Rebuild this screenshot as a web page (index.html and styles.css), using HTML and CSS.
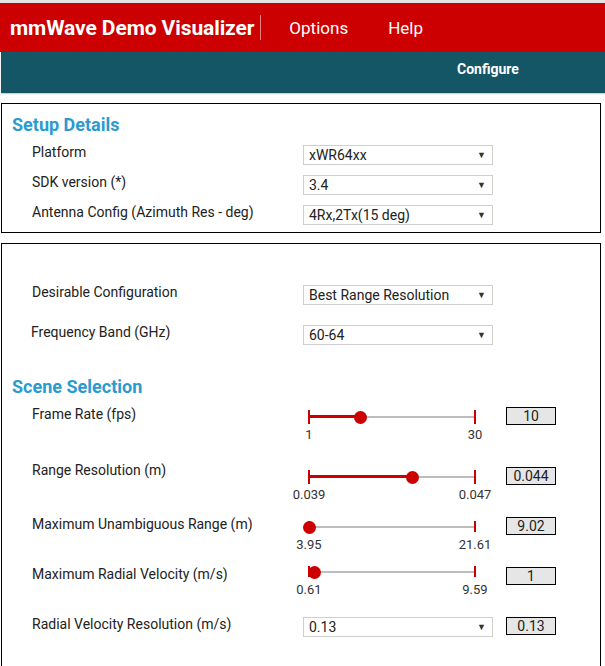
FILE: index.html
```html
<!DOCTYPE html>
<html lang="en">
<head>
<meta charset="utf-8">
<title>mmWave Demo Visualizer</title>
<link rel="stylesheet" href="styles.css">
</head>
<body>
<div class="page">
  <header class="appbar">
    <div class="appbar__title">mmWave Demo Visualizer</div>
    <div class="appbar__divider"></div>
    <nav class="appbar__nav">
      <span>Options</span>
      <span>Help</span>
    </nav>
  </header>
  <div class="tabbar">
    <span class="tabbar__tab">Configure</span>
  </div>

  <main class="main">
    <section class="card card--setup">
      <h2 class="card__heading">Setup Details</h2>
      <div class="rows rows--setup">
        <div class="row">
          <div class="row__label">Platform</div>
          <div class="select"><span>xWR64xx</span><span class="select__arrow">&#9660;</span></div>
        </div>
        <div class="row">
          <div class="row__label">SDK version (*)</div>
          <div class="select"><span>3.4</span><span class="select__arrow">&#9660;</span></div>
        </div>
        <div class="row">
          <div class="row__label">Antenna Config (Azimuth Res - deg)</div>
          <div class="select"><span>4Rx,2Tx(15 deg)</span><span class="select__arrow">&#9660;</span></div>
        </div>
      </div>
    </section>

    <section class="card card--scene">
      <div class="rows rows--config">
        <div class="row">
          <div class="row__label">Desirable Configuration</div>
          <div class="select"><span>Best Range Resolution</span><span class="select__arrow">&#9660;</span></div>
        </div>
        <div class="row">
          <div class="row__label row__label--shift">Frequency Band (GHz)</div>
          <div class="select"><span>60-64</span><span class="select__arrow">&#9660;</span></div>
        </div>
      </div>

      <h2 class="card__heading card__heading--scene">Scene Selection</h2>

      <div class="srows">
        <div class="row row--slider row--tall">
          <div class="row__label">Frame Rate (fps)</div>
          <div class="slider">
            <div class="slider__track">
              <div class="slider__fill" style="width:31%"></div>
              <span class="slider__tick slider__tick--min"></span>
              <span class="slider__tick slider__tick--max"></span>
              <span class="slider__thumb" style="left:31%"></span>
            </div>
            <div class="slider__ends"><span>1</span><span>30</span></div>
          </div>
          <div class="value">10</div>
        </div>

        <div class="row row--slider">
          <div class="row__label row__label--up">Range Resolution (m)</div>
          <div class="slider">
            <div class="slider__track">
              <div class="slider__fill" style="width:62.5%"></div>
              <span class="slider__tick slider__tick--min"></span>
              <span class="slider__tick slider__tick--max"></span>
              <span class="slider__thumb" style="left:62.5%"></span>
            </div>
            <div class="slider__ends"><span>0.039</span><span>0.047</span></div>
          </div>
          <div class="value">0.044</div>
        </div>

        <div class="row row--slider">
          <div class="row__label">Maximum Unambiguous Range (m)</div>
          <div class="slider">
            <div class="slider__track">
              <div class="slider__fill" style="width:0%"></div>
              <span class="slider__tick slider__tick--min slider__tick--short"></span>
              <span class="slider__tick slider__tick--max slider__tick--short"></span>
              <span class="slider__thumb" style="left:0%"></span>
            </div>
            <div class="slider__ends"><span>3.95</span><span>21.61</span></div>
          </div>
          <div class="value">9.02</div>
        </div>

        <div class="row row--slider">
          <div class="row__label">Maximum Radial Velocity (m/s)</div>
          <div class="slider slider--high">
            <div class="slider__track">
              <div class="slider__fill" style="width:3.6%"></div>
              <span class="slider__tick slider__tick--min slider__tick--short"></span>
              <span class="slider__tick slider__tick--max slider__tick--short"></span>
              <span class="slider__thumb" style="left:3.6%"></span>
            </div>
            <div class="slider__ends"><span>0.61</span><span>9.59</span></div>
          </div>
          <div class="value">1</div>
        </div>

        <div class="row row--slider">
          <div class="row__label">Radial Velocity Resolution (m/s)</div>
          <div class="select"><span>0.13</span><span class="select__arrow">&#9660;</span></div>
          <div class="value">0.13</div>
        </div>
      </div>
    </section>
  </main>
</div>
</body>
</html>
```

FILE: styles.css
```css
* { box-sizing: border-box; }

html, body {
  margin: 0;
  padding: 0;
  background: #ffffff;
}

body {
  font-family: Roboto, "Liberation Sans", Arial, sans-serif;
  color: #222222;
}

.page {
  height: 100vh;
  overflow: hidden;
  border-top: 3px solid #e4e4e4;
}

/* ---------- app bar ---------- */
.appbar {
  height: 49px;
  background: #cc0000;
  display: flex;
  align-items: center;
  padding-left: 10px;
  color: #ffffff;
}

.appbar__title {
  font-size: 21px;
  font-weight: 700;
  line-height: 24px;
  letter-spacing: -0.1px;
}

.appbar__divider {
  width: 1px;
  height: 25px;
  background: rgba(255, 255, 255, 0.5);
  margin: 0 28px 0 6px;
}

.appbar__nav {
  display: flex;
  gap: 40px;
  font-size: 17px;
  line-height: 20px;
}

/* ---------- tab bar ---------- */
.tabbar {
  height: 41px;
  margin-left: 1px;
  background: #155666;
  box-shadow: 0 1px 1px rgba(60, 110, 130, 0.3);
  padding: 7px 0 0 456px;
}

.tabbar__tab {
  color: #ffffff;
  font-size: 14px;
  font-weight: 700;
  line-height: 16px;
}

/* ---------- main ---------- */
.main {
  padding: 10px 4px 0 1px;
  display: flex;
  flex-direction: column;
  gap: 10px;
}

.card {
  width: 600px;
  border: 1px solid #000000;
}

.card--setup {
  padding: 9px 0 7px 0;
}

.card--scene {
  padding: 41px 0 0 0;
}

.card__heading {
  margin: 0 0 8px 10px;
  font-size: 18px;
  font-weight: 700;
  line-height: 24px;
  color: #2b9bcf;
}

.card__heading--scene {
  margin-top: 30px;
}

.rows {
  display: flex;
  flex-direction: column;
  padding-left: 30px;
}

.rows--setup { gap: 10px; }
.rows--config { gap: 20px; }

.srows {
  display: flex;
  flex-direction: column;
  padding-left: 30px;
}

.row {
  display: grid;
  grid-template-columns: 258px 190px 50px;
  column-gap: 13px;
  align-items: start;
  height: 20px;
}

.row--slider { height: 50px; }
.row--tall { height: 60px; }

.row__label {
  font-size: 14px;
  line-height: 14px;
  color: #222222;
}

.row__label--shift { margin-left: -1px; }
.row__label--up { margin-top: -4px; }

/* ---------- select ---------- */
.select {
  height: 20px;
  border: 1px solid #cfcfcf;
  background: #ffffff;
  display: flex;
  align-items: center;
  justify-content: space-between;
  padding: 0 5px 0 5px;
  font-size: 14px;
  line-height: 18px;
  color: #222222;
}

.select__arrow {
  font-size: 9px;
  line-height: 10px;
  color: #333333;
  margin-right: 1px;
}

/* ---------- slider ---------- */
.slider {
  width: 166px;
  margin-left: 6px;
  padding-top: 9px;
}

.slider--high { padding-top: 4px; }

.slider__track {
  position: relative;
  height: 2px;
  background: #bdbdbd;
}

.slider__fill {
  position: absolute;
  left: 0;
  top: -1px;
  height: 3px;
  background: #cc0000;
}

.slider__tick {
  position: absolute;
  top: -6px;
  width: 2px;
  height: 14px;
  background: #cc0000;
}

.slider__tick--short {
  top: -5px;
  height: 11px;
}

.slider__tick--min { left: -1px; }
.slider__tick--max { right: -1px; }

.slider__thumb {
  position: absolute;
  top: -5.5px;
  width: 13px;
  height: 13px;
  margin-left: -6.5px;
  border-radius: 50%;
  background: #cc0000;
}

.slider__ends {
  display: flex;
  justify-content: space-between;
  margin: 9px -20px 0;
  font-size: 13px;
  line-height: 15px;
  color: #333333;
}

.slider__ends span {
  width: 40px;
  text-align: center;
}

/* ---------- value box ---------- */
.value {
  width: 50px;
  height: 18px;
  border: 1px solid #000000;
  background: #e6e6e6;
  text-align: center;
  font-size: 14px;
  line-height: 16px;
  color: #222222;
}
```
